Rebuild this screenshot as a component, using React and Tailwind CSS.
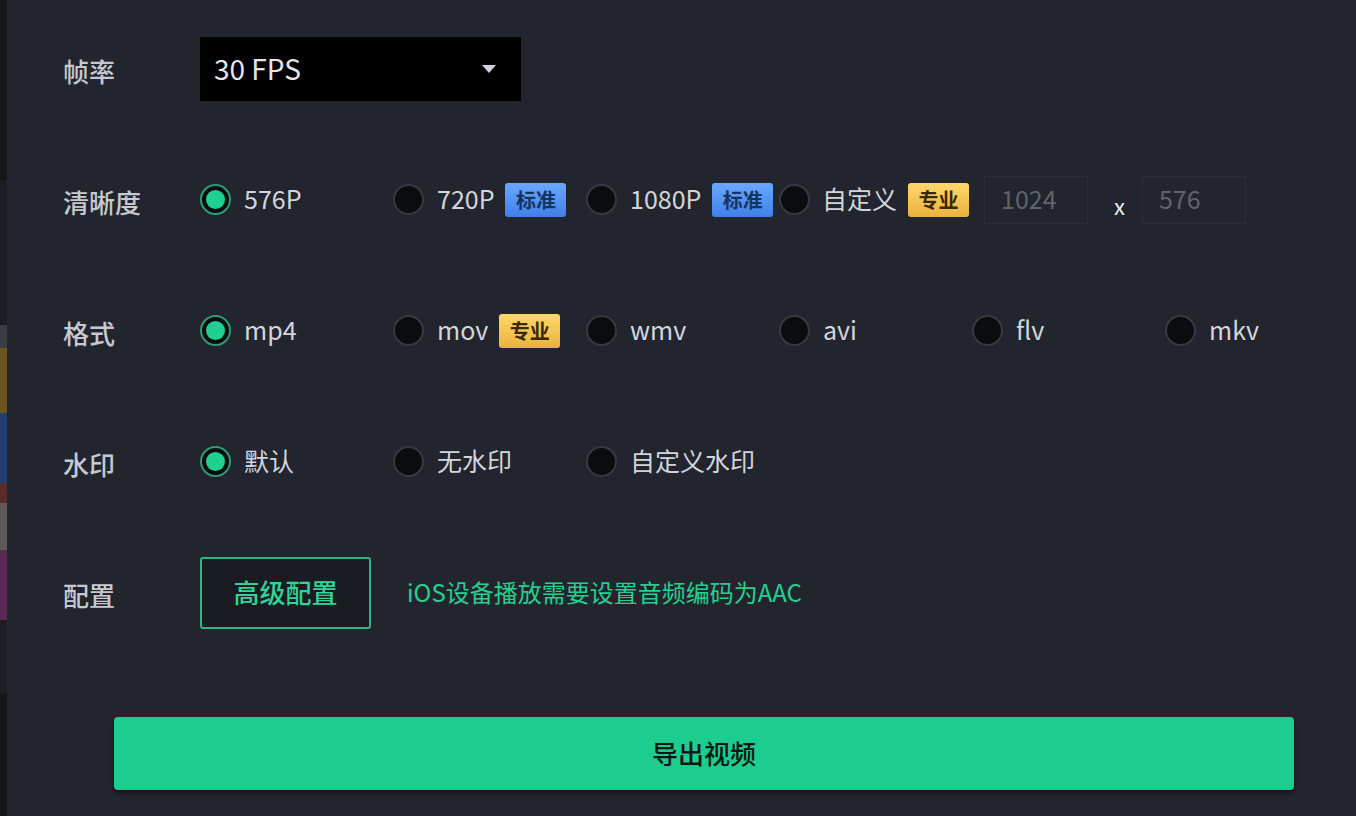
import React from 'react';

const FONT = { fontFamily: '"Noto Sans CJK SC", "Noto Sans", sans-serif' };

function Radio({ checked }) {
  return (
    <span
      className={`flex h-[31px] w-[31px] shrink-0 items-center justify-center rounded-full border-2 bg-[#0b0c0f] ${
        checked ? 'border-[#2c9c78]' : 'border-[#363941]'
      }`}
    >
      {checked && <span className="h-[19px] w-[19px] rounded-full bg-[#1fd090]" />}
    </span>
  );
}

function Badge({ kind }) {
  const blue = kind === 'std';
  return (
    <span
      className={`ml-[11px] flex h-[34px] w-[61px] items-center justify-center rounded-[3px] text-[20px] font-bold leading-none ${
        blue
          ? 'bg-gradient-to-b from-[#6aa8ff] to-[#3f80e8] text-[#16345f]'
          : 'bg-gradient-to-b from-[#ffd76a] to-[#eab23c] text-[#3a2800]'
      }`}
    >
      {blue ? '标准' : '专业'}
    </span>
  );
}

function Option({ label, checked, badge }) {
  return (
    <div className="flex w-[193px] shrink-0 items-center">
      <Radio checked={checked} />
      <span className="mb-[3px] ml-[13px] text-[25px] leading-none text-[#d2d5dc]">{label}</span>
      {badge && <Badge kind={badge} />}
    </div>
  );
}

function Row({ label, children }) {
  return (
    <div className="flex h-[131px] items-center">
      <div className="w-[137px] shrink-0 pt-[4px] text-[26px] font-medium leading-none text-[#c6c9d0]">{label}</div>
      <div className="flex items-center">{children}</div>
    </div>
  );
}

function SizeInput({ value }) {
  return (
    <div className="flex h-[48px] w-[104px] items-center border border-[#2a2d35] pb-[2px] pl-[16px] text-[25px] leading-none text-[#5f636c]">
      {value}
    </div>
  );
}

export default function App() {
  return (
    <div className="flex h-[816px] w-[1356px] overflow-hidden bg-[#22252e]" style={FONT}>
      {/* Left edge of neighbouring panel */}
      <div className="flex w-[7px] shrink-0 flex-col">
        <div className="h-[180px] bg-[#16171b]" />
        <div className="h-[145px] bg-[#1b1d22]" />
        <div className="h-[23px] bg-[#3a3d44]" />
        <div className="h-[65px] bg-[#6e5520]" />
        <div className="h-[70px] bg-[#1f3f6e]" />
        <div className="h-[20px] bg-[#5a2a2a]" />
        <div className="h-[47px] bg-[#5c5a58]" />
        <div className="h-[70px] bg-[#5a2a55]" />
        <div className="h-[73px] bg-[#1c1e23]" />
        <div className="flex-1 bg-[#15161a]" />
      </div>

      <div className="flex flex-1 flex-col pl-[56px] pt-[3px]">
        <Row label="帧率">
          <div className="flex h-[64px] w-[321px] items-center justify-between bg-black pl-[14px] pr-[25px]">
            <span className="mb-[2px] text-[28px] leading-none text-[#e4e6ea]">30 FPS</span>
            <svg width="14" height="8" viewBox="0 0 14 8">
              <path d="M0 0 H14 L7 8 Z" fill="#cfd3da" />
            </svg>
          </div>
        </Row>

        <Row label="清晰度">
          <Option label="576P" checked />
          <Option label="720P" badge="std" />
          <Option label="1080P" badge="std" />
          <div className="flex items-center">
            <Radio />
            <span className="mb-[3px] ml-[12px] text-[25px] leading-none text-[#d2d5dc]">自定义</span>
            <Badge kind="pro" />
            <div className="ml-[15px]">
              <SizeInput value="1024" />
            </div>
            <span className="ml-[26px] mr-[17px] mt-[10px] text-[22px] leading-none text-[#eef0f3]">x</span>
            <SizeInput value="576" />
          </div>
        </Row>

        <Row label="格式">
          <Option label="mp4" checked />
          <Option label="mov" badge="pro" />
          <Option label="wmv" />
          <Option label="avi" />
          <Option label="flv" />
          <Option label="mkv" />
        </Row>

        <Row label="水印">
          <Option label="默认" checked />
          <Option label="无水印" />
          <Option label="自定义水印" />
        </Row>

        <Row label="配置">
          <button className="flex h-[72px] w-[171px] items-center justify-center rounded-[3px] border-2 border-[#2db488] bg-[#1a1c21] pb-[2px] text-[26px] font-medium leading-none text-[#2fd49a]">
            高级配置
          </button>
          <span className="mb-[2px] ml-[36px] text-[24px] leading-none text-[#25d08f]">
            iOS设备播放需要设置音频编码为AAC
          </span>
        </Row>

        <div className="ml-[51px] mt-[59px] w-[1180px]">
          <button className="flex h-[73px] w-full items-center justify-center rounded-[4px] bg-[#1ccd8f] pb-[2px] text-[26px] font-medium leading-none text-[#0b1712] shadow-[0_3px_4px_rgba(0,0,0,0.45)]">
            导出视频
          </button>
        </div>
      </div>
    </div>
  );
}
